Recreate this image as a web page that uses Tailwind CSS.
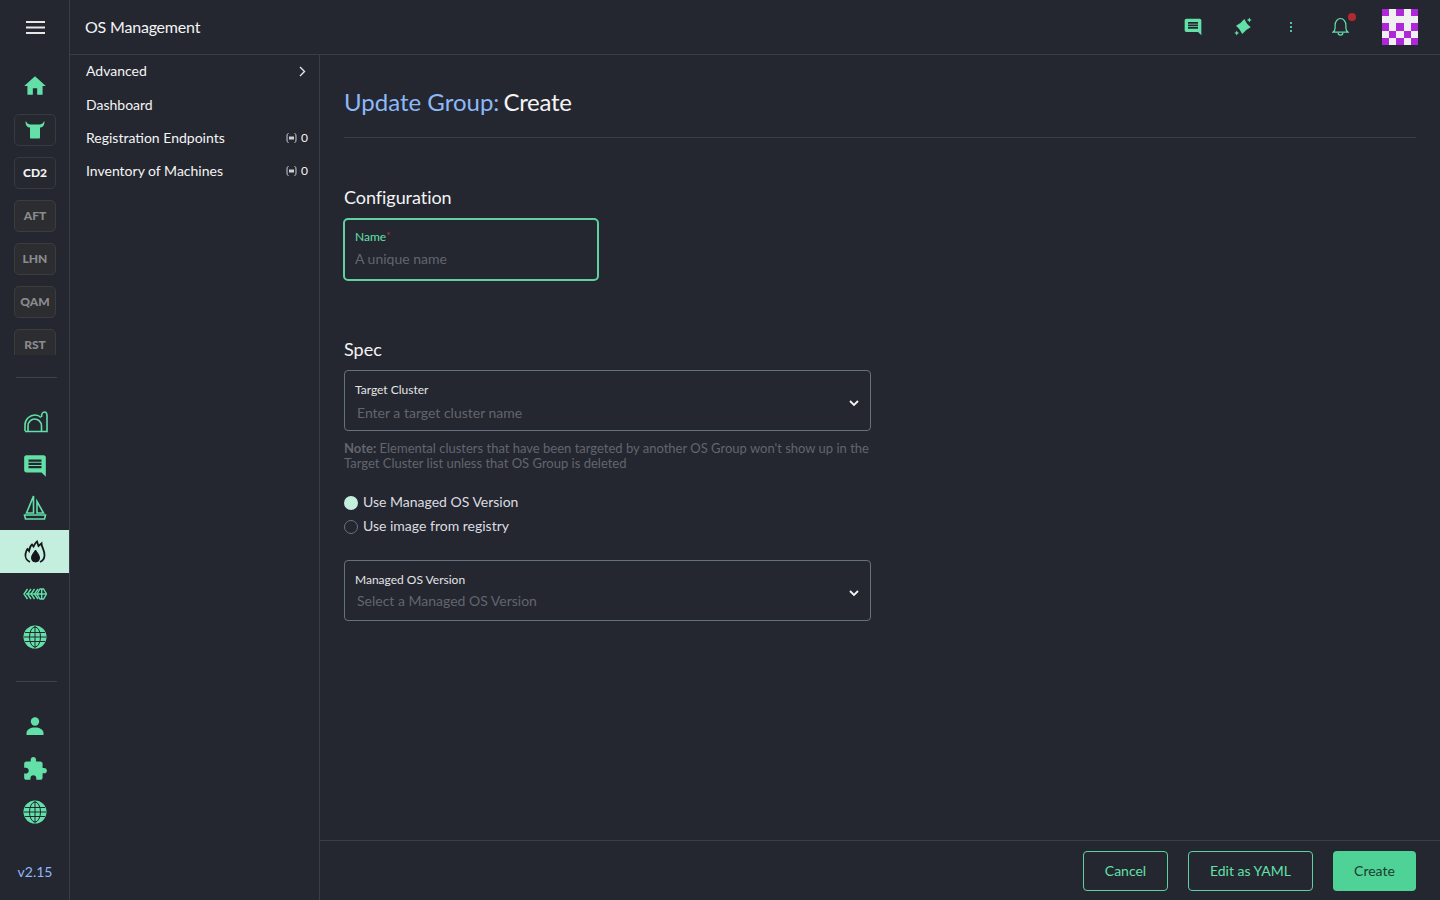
<!DOCTYPE html>
<html lang="en">
<head>
    <meta charset="UTF-8">
    <title>OS Management</title>
    <script src="https://cdn.jsdelivr.net/npm/@tailwindcss/browser@4"></script>
</head>
<body class="bg-[#242730] font-['Lato',sans-serif] text-[#f4f4f5] h-[900px] w-[1440px] overflow-hidden">
<div class="flex h-[900px]">
    <!-- Icon rail -->
    <aside class="w-[70px] shrink-0 border-r border-[#3a3d47] pl-px flex flex-col text-[#62e0a8]">
        <div class="h-[55px] pl-[2px] flex items-center justify-center">
            <svg width="20" height="14" viewBox="0 0 20 14" fill="#e6e6e6"><rect y="0" width="19" height="2"/><rect y="5.5" width="19" height="2"/><rect y="11" width="19" height="2"/></svg>
        </div>
        <div class="h-[43px] mt-[9px] flex items-center justify-center">
            <svg width="26" height="26" viewBox="0 0 24 24" fill="currentColor"><path d="M10 20v-6h4v6h5v-8h3L12 3 2 12h3v8z"/></svg>
        </div>
        <div class="mt-[7px] h-[241px] overflow-hidden flex flex-col gap-[11px] items-center text-[12px] font-black">
            <div class="w-[42px] h-[32px] shrink-0 rounded-[5px] border border-[#373a44] bg-[#26282f] flex items-center justify-center">
                <svg width="22" height="22" viewBox="0 0 22 22" fill="currentColor"><path d="M6 5.500h10v13c0 .6-.4 1-1 1H7c-.6 0-1-.4-1-1z"/><path d="M1.700 2 3.500 4.500C4 5 5 5.300 6 5.500V8.500C3 8.500 1.200 6 1.700 2zM20.300 2 18.500 4.500C18 5 17 5.300 16 5.500V8.500C19 8.500 20.800 6 20.300 2z"/></svg>
            </div>
            <div class="w-[42px] h-[32px] shrink-0 rounded-[5px] border border-[#373a44] bg-[#26282f] flex items-center justify-center text-[#f4f4f5]">CD2</div>
            <div class="w-[42px] h-[32px] shrink-0 rounded-[5px] border border-[#3b3c40] bg-[#2c2d30] flex items-center justify-center text-[#8a8b8e]">AFT</div>
            <div class="w-[42px] h-[32px] shrink-0 rounded-[5px] border border-[#3b3c40] bg-[#2c2d30] flex items-center justify-center text-[#8a8b8e]">LHN</div>
            <div class="w-[42px] h-[32px] shrink-0 rounded-[5px] border border-[#3b3c40] bg-[#2c2d30] flex items-center justify-center text-[#8a8b8e]">QAM</div>
            <div class="w-[42px] h-[32px] shrink-0 rounded-[5px] border border-[#3b3c40] bg-[#2c2d30] flex items-center justify-center text-[#8a8b8e]">RST</div>
        </div>
        <div class="mt-[22px] ml-[15px] mr-[12px] h-px bg-[#3f4149]"></div>
        <div class="mt-[23px] flex flex-col">
            <div class="h-[43px] pl-px pb-[2px] flex items-center justify-center">
                <svg width="24" height="22" viewBox="0 0 24 22" fill="none" stroke="currentColor" stroke-width="1.600"><path d="M1 20V14C1 8 6 4 11 4C13.500 4 15.500 5 17 6.500"/><path d="M4 20V15C4 10.500 7.500 8 10.500 8C14 8 17.500 10.500 17.500 15V20"/><path d="M17.500 6C17.500 3 18.500 1 20.500 1C22 1 23 2.500 23 5V20.500H1"/></svg>
            </div>
            <div class="h-[43px] flex items-center justify-center">
                <svg width="26" height="26" viewBox="0 0 24 24" fill="currentColor"><path d="M20 2H4c-1.100 0-2 .9-2 2v12c0 1.100.9 2 2 2h14l4 4V4c0-1.100-.9-2-2-2zm-2 12H6v-2h12v2zm0-3H6V9h12v2zm0-3H6V6h12v2z"/></svg>
            </div>
            <div class="h-[43px] pb-[3px] flex items-center justify-center">
                <svg width="24" height="26" viewBox="0 0 24 26" fill="none" stroke="currentColor" stroke-width="1.600"><path d="M10.500 2 3.500 19h7zM14 7.500 20.500 19H14z"/><path d="M1.500 21h21l-1 4h-19z"/></svg>
            </div>
            <div class="h-[43px] -ml-px pl-px bg-[#c4eedd] flex items-center justify-center text-[#15171c]">
                <svg width="22" height="24" viewBox="0 0 22 24" fill="none" stroke="currentColor" stroke-width="1.800"><path d="M6 22C2.500 20.500 1 17 1.500 14C1.800 12 2.500 10 3.500 9L5 11C5.500 8 6 6 8 4.500L9.500 6.500C10.500 4.500 11.500 2.500 13 1.500L14.500 6L17.500 3.500C17.500 7 20.500 10 20.500 15C20.500 18 18.500 21 16 22"/><path fill="currentColor" stroke-width="1" d="M11.500 10c1.500 2.500 4 5 4 8a4 4 0 0 1-8 0c0-3 2.500-5.500 4-8z"/></svg>
            </div>
            <div class="h-[43px] pb-px flex items-center justify-center">
                <svg width="24" height="12" viewBox="0 0 24 12" fill="none" stroke="currentColor" stroke-width="1.400"><path d="M4.500 1 1 6l3.500 5M8 1 4.500 6 8 11M11.500 1 8 6l3.500 5M15 1 11.500 6l3.500 5"/><path d="M3 6h11"/><path d="M17 1h3.500L23.500 6l-3 5H17l-3-5z"/><path d="M14 6h9.500M18.700 1v10"/></svg>
            </div>
            <div class="h-[43px] pb-[2px] flex items-center justify-center">
                <svg width="24" height="24" viewBox="0 0 24 24"><circle cx="12" cy="12" r="11.500" fill="currentColor"/><g fill="none" stroke="#242730" stroke-width="1"><path d="M2 7.500h20M1 12h22M2 16.500h20M12 1v22"/><ellipse cx="12" cy="12" rx="5.500" ry="10"/></g></svg>
            </div>
        </div>
        <div class="mt-[22px] ml-[15px] mr-[12px] h-px bg-[#3f4149]"></div>
        <div class="mt-[23px] flex flex-col">
            <div class="h-[43px] pb-[2px] flex items-center justify-center">
                <svg width="18" height="18" viewBox="0 0 18 18" fill="currentColor"><circle cx="9" cy="4.500" r="4.200"/><path d="M.5 18v-2C.5 12.500 4.500 10.500 9 10.500s8.500 2 8.500 5.500v2z"/></svg>
            </div>
            <div class="h-[43px] pb-[2px] flex items-center justify-center">
                <svg width="26" height="26" viewBox="0 0 24 24" fill="currentColor"><path d="M20.500 11H19V7c0-1.100-.9-2-2-2h-4V3.500C13 2.120 11.880 1 10.500 1S8 2.120 8 3.500V5H4c-1.100 0-1.990.9-1.990 2v3.800H3.500c1.490 0 2.700 1.210 2.700 2.700s-1.210 2.700-2.700 2.700H2V20c0 1.100.9 2 2 2h3.800v-1.500c0-1.490 1.210-2.700 2.700-2.700 1.490 0 2.700 1.210 2.700 2.700V22H17c1.100 0 2-.9 2-2v-4h1.500c1.380 0 2.500-1.120 2.500-2.500S21.880 11 20.500 11z"/></svg>
            </div>
            <div class="h-[43px] pb-[2px] flex items-center justify-center">
                <svg width="24" height="24" viewBox="0 0 24 24"><circle cx="12" cy="12" r="11.500" fill="currentColor"/><g fill="none" stroke="#242730" stroke-width="1"><path d="M2 7.500h20M1 12h22M2 16.500h20M12 1v22"/><ellipse cx="12" cy="12" rx="5.500" ry="10"/></g></svg>
            </div>
        </div>
        <div class="mt-[28px] text-center text-[14px] leading-[20px] text-[#8db8f8]">v2.15</div>
    </aside>

    <div class="flex-1 min-w-0 flex flex-col">
        <!-- Top bar -->
        <header class="h-[55px] shrink-0 border-b border-[#3a3d47] flex items-center text-[#62e0a8]">
            <div class="pl-[15px] text-[16px] text-[#f4f4f5] flex-1 tracking-[-0.2px]">OS Management</div>
            <svg class="mr-[31px]" width="20" height="20" viewBox="0 0 24 24" fill="currentColor"><path d="M20 2H4c-1.100 0-2 .9-2 2v12c0 1.100.9 2 2 2h14l4 4V4c0-1.100-.9-2-2-2zm-2 12H6v-2h12v2zm0-3H6V9h12v2zm0-3H6V6h12v2z"/></svg>
            <svg class="mr-[36px]" width="20" height="20" viewBox="0 0 20 20" fill="currentColor"><path d="M10.300 2Q12.500 7 16.700 10.300Q11.750 12.600 8.300 17Q6.200 12 2 8.700Q7 6.400 10.300 2z"/><path d="M15.300 0.500 16.100 2.200 17.800 3 16.100 3.800 15.300 5.500 14.500 3.800 12.800 3 14.500 2.200zM2.700 13.500 3.500 15.200 5.200 16 3.500 16.800 2.700 18.500 1.900 16.800 .2 16 1.900 15.200z"/></svg>
            <svg class="mr-[40px]" width="2" height="10" viewBox="0 0 2 10" fill="#55c596"><rect width="2" height="2"/><rect y="4" width="2" height="2"/><rect y="8" width="2" height="2"/></svg>
            <div class="relative mr-[33px] w-[17px] h-[20px]">
                <svg width="17" height="20" viewBox="0 0 18 20" fill="none" stroke="currentColor" stroke-width="1.300"><path d="M1 15.500c1.500-1 2.300-2 2.300-4.500V8C3.300 4.500 5.500 1 9 1s5.700 3.500 5.700 7v3c0 2.500.8 3.500 2.300 4.500z"/><path d="M6.500 16a2.500 2.500 0 0 0 5 0"/></svg>
                <span class="absolute -top-[4px] -right-[7px] w-[8px] h-[8px] rounded-full bg-[#b02a30]"></span>
            </div>
            <svg class="mr-[22px]" width="36" height="36" viewBox="0 0 5 5" shape-rendering="crispEdges">
                <rect width="5" height="5" fill="#f0f0f0"/>
                <g fill="#ae27d9"><rect x="0" y="0" width="1" height="1"/><rect x="2" y="0" width="1" height="1"/><rect x="4" y="0" width="1" height="1"/><rect x="0" y="2" width="1" height="1"/><rect x="2" y="2" width="1" height="1"/><rect x="4" y="2" width="1" height="1"/><rect x="1" y="3" width="1" height="1"/><rect x="3" y="3" width="1" height="1"/><rect x="0" y="4" width="1" height="1"/><rect x="2" y="4" width="1" height="1"/><rect x="4" y="4" width="1" height="1"/></g>
            </svg>
        </header>

        <div class="flex-1 min-h-0 flex">
            <!-- Side nav -->
            <nav class="w-[250px] shrink-0 border-r border-[#3a3d47] text-[14px] pl-[16px] pr-[11px]">
                <div class="h-[33px] pb-[2px] flex items-center justify-between">
                    <span>Advanced</span>
                    <svg class="mr-[2px] mt-[2px]" width="7" height="11" viewBox="0 0 7 11" fill="none" stroke="#e6e6e6" stroke-width="1.400"><path d="M1 1l4.500 4.500L1 10"/></svg>
                </div>
                <div class="h-[33px] flex items-center">Dashboard</div>
                <div class="h-[33px] flex items-center justify-between">
                    <span>Registration Endpoints</span>
                    <span class="flex items-center gap-[4px] text-[12px]">
                        <svg width="11" height="10" viewBox="0 0 11 10" fill="none" stroke="#cfcfd2" stroke-width="1"><path d="M2.500 .5C1 .5 1 2 1 5s0 4.500 1.500 4.500M8.500 .5C10 .5 10 2 10 5s0 4.500-1.500 4.500"/><rect x="3" y="3.500" width="5" height="3" fill="#cfcfd2" stroke="none"/></svg>
                        0
                    </span>
                </div>
                <div class="h-[33px] flex items-center justify-between">
                    <span>Inventory of Machines</span>
                    <span class="flex items-center gap-[4px] text-[12px]">
                        <svg width="11" height="10" viewBox="0 0 11 10" fill="none" stroke="#cfcfd2" stroke-width="1"><path d="M2.500 .5C1 .5 1 2 1 5s0 4.500 1.500 4.500M8.500 .5C10 .5 10 2 10 5s0 4.500-1.500 4.500"/><rect x="3" y="3.500" width="5" height="3" fill="#cfcfd2" stroke="none"/></svg>
                        0
                    </span>
                </div>
            </nav>

            <div class="flex-1 min-w-0 flex flex-col">
                <!-- Form -->
                <main class="flex-1 min-h-0 pl-[24px] pr-[24px] pt-[32px]">
                    <h1 class="text-[24px] leading-[30px] pb-[20px] border-b border-[#3a3d47] [word-spacing:-2px]"><span class="text-[#8db8f8] [word-spacing:0]">Update Group:</span> <span class="tracking-[-0.3px]">Create</span></h1>
                    <h3 class="mt-[47px] text-[18px] leading-[24px] tracking-[-0.05px]">Configuration</h3>
                    <div class="mt-[9px] -ml-px w-[256px] h-[63px] rounded-[5px] border-2 border-[#5fd1a0] pl-[10px] pt-[8px]">
                        <div class="text-[12px] leading-[18px] text-[#62e0a8]">Name<span class="text-[#c0303a] text-[10px] leading-[0] align-[2px]">*</span></div>
                        <div class="mt-[3px] text-[14px] leading-[20px] text-[#62656e]">A unique name</div>
                    </div>
                    <h3 class="mt-[56px] text-[18px] leading-[24px]">Spec</h3>
                    <div class="w-[527px]">
                        <div class="mt-[9px] h-[61px] rounded-[4px] border border-[#66717f] pl-[10px] pr-[11px] flex items-center">
                            <div class="flex-1 pt-[3px]">
                                <div class="text-[12px] leading-[18px] text-[#e4e4e6]">Target Cluster</div>
                                <div class="mt-[4px] pl-[2px] text-[14px] leading-[20px] text-[#62656e]">Enter a target cluster name</div>
                            </div>
                            <svg class="mt-[5px]" width="10" height="7" viewBox="0 0 10 7" fill="none" stroke="#f4f4f5" stroke-width="1.800"><path d="M1 1l4 4 4-4"/></svg>
                        </div>
                        <p class="mt-[10px] text-[13px] leading-[15px] text-[#62656e] whitespace-nowrap"><b class="font-bold">Note:</b> Elemental clusters that have been targeted by another OS Group won't show up in the<br>Target Cluster list unless that OS Group is deleted</p>
                        <div class="mt-[18px] h-[24px] flex items-center gap-[5px] text-[14px] text-[#dcdce0]">
                            <span class="mt-[3px] w-[14px] h-[14px] rounded-full bg-[#c4eedd]"></span>Use Managed OS Version
                        </div>
                        <div class="h-[24px] flex items-center gap-[5px] text-[14px] text-[#dcdce0]">
                            <span class="mt-[3px] w-[14px] h-[14px] rounded-full border border-[#66717f]"></span>Use image from registry
                        </div>
                        <div class="mt-[23px] h-[61px] rounded-[4px] border border-[#66717f] pl-[10px] pr-[11px] flex items-center">
                            <div class="flex-1">
                                <div class="text-[12px] leading-[18px] text-[#e4e4e6]">Managed OS Version</div>
                                <div class="mt-[2px] pl-[2px] text-[14px] leading-[20px] text-[#62656e]">Select a Managed OS Version</div>
                            </div>
                            <svg class="mt-[5px]" width="10" height="7" viewBox="0 0 10 7" fill="none" stroke="#f4f4f5" stroke-width="1.800"><path d="M1 1l4 4 4-4"/></svg>
                        </div>
                    </div>
                </main>
                <!-- Footer -->
                <footer class="h-[60px] shrink-0 border-t border-[#3a3d47] pr-[24px] flex items-start justify-end pt-[10px] text-[14px]">
                    <button class="h-[40px] w-[85px] pb-[2px] rounded-[4px] border border-[#5fd1a0] text-[#62e0a8]">Cancel</button>
                    <button class="ml-[20px] h-[40px] w-[125px] pb-[2px] rounded-[4px] border border-[#5fd1a0] text-[#62e0a8]">Edit as YAML</button>
                    <button class="ml-[20px] h-[40px] w-[83px] pb-[2px] rounded-[4px] bg-[#4fd295] text-[#1d3b30]">Create</button>
                </footer>
            </div>
        </div>
    </div>
</div>
</body>
</html>
